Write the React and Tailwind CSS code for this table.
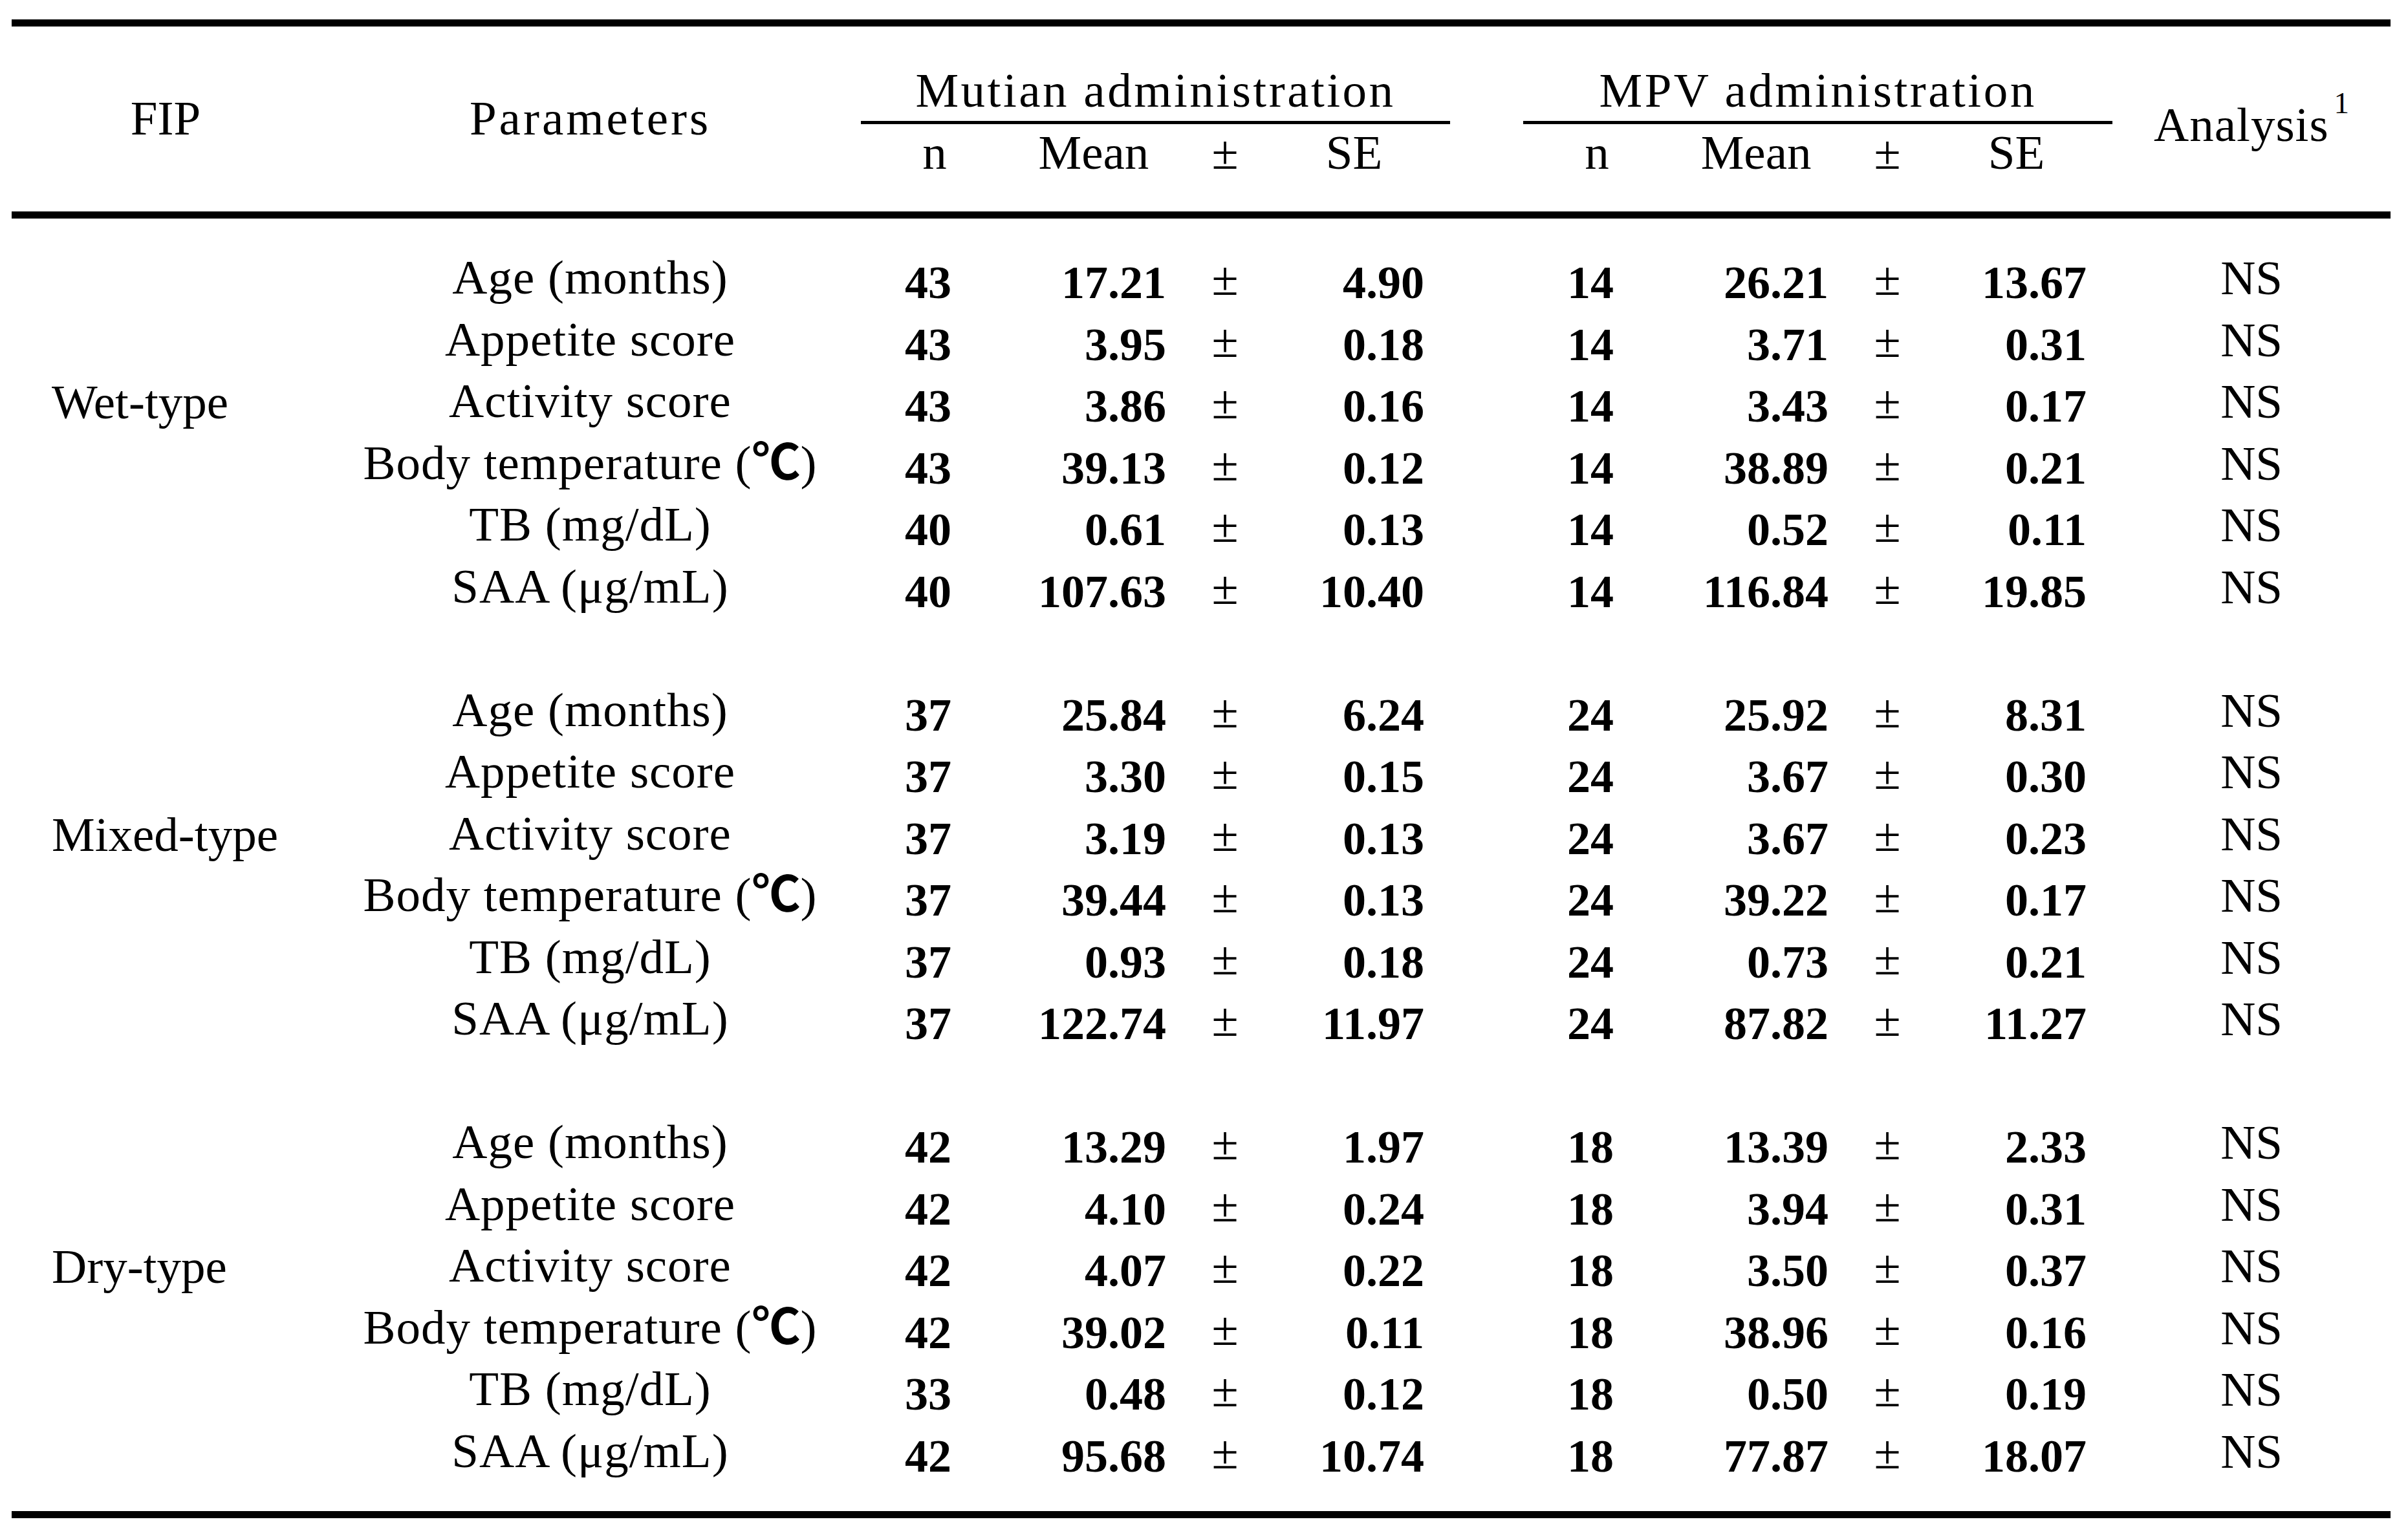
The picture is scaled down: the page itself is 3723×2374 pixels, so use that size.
import React from 'react';

const groups = [
    {
        label: 'Wet-type',
        rows: [
            ['Age (months)', '43', '17.21', '4.90', '14', '26.21', '13.67'],
            ['Appetite score', '43', '3.95', '0.18', '14', '3.71', '0.31'],
            ['Activity score', '43', '3.86', '0.16', '14', '3.43', '0.17'],
            ['temp', '43', '39.13', '0.12', '14', '38.89', '0.21'],
            ['TB (mg/dL)', '40', '0.61', '0.13', '14', '0.52', '0.11'],
            ['SAA (μg/mL)', '40', '107.63', '10.40', '14', '116.84', '19.85'],
        ],
    },
    {
        label: 'Mixed-type',
        rows: [
            ['Age (months)', '37', '25.84', '6.24', '24', '25.92', '8.31'],
            ['Appetite score', '37', '3.30', '0.15', '24', '3.67', '0.30'],
            ['Activity score', '37', '3.19', '0.13', '24', '3.67', '0.23'],
            ['temp', '37', '39.44', '0.13', '24', '39.22', '0.17'],
            ['TB (mg/dL)', '37', '0.93', '0.18', '24', '0.73', '0.21'],
            ['SAA (μg/mL)', '37', '122.74', '11.97', '24', '87.82', '11.27'],
        ],
    },
    {
        label: 'Dry-type',
        rows: [
            ['Age (months)', '42', '13.29', '1.97', '18', '13.39', '2.33'],
            ['Appetite score', '42', '4.10', '0.24', '18', '3.94', '0.31'],
            ['Activity score', '42', '4.07', '0.22', '18', '3.50', '0.37'],
            ['temp', '42', '39.02', '0.11', '18', '38.96', '0.16'],
            ['TB (mg/dL)', '33', '0.48', '0.12', '18', '0.50', '0.19'],
            ['SAA (μg/mL)', '42', '95.68', '10.74', '18', '77.87', '18.07'],
        ],
    },
];

// clases de celdas del cuerpo (padding explícito: td trae 1px del navegador)
const paramCls = 'align-top text-center pt-[2px] pb-0 px-0 leading-[93.5px] tracking-[1px] whitespace-nowrap';
const numCls = 'align-top text-center font-bold text-[72px] pt-[20px] pb-0 px-0 leading-[75.5px] whitespace-nowrap';
const valCls = 'align-top text-right font-bold text-[72px] pt-[20px] pb-0 pl-0 pr-[40px] leading-[75.5px] whitespace-nowrap';
const pmCls = 'align-top text-center pt-[7px] pb-0 px-0 leading-[88.5px]';
const nsCls = 'align-top text-center pt-[4px] pb-0 px-0 leading-[91.5px]';

const headA = 'align-top font-normal text-center px-0 leading-[83px] whitespace-nowrap';
const headB = 'align-top font-normal px-0 leading-[83px] pt-[2px] pb-[50px] border-b-[11px] border-black whitespace-nowrap';

function ParamName({ name }) {
    if (name !== 'temp') return name;
    return (
        <>
            Body temperature (<span className="font-['Noto_Sans_CJK_JP',sans-serif] font-bold tracking-normal leading-[0px]">℃</span>)
        </>
    );
}

function SubHeaders() {
    return (
        <>
            <th className={`${headB} text-center pl-[20px]`}>n</th>
            <th className={`${headB} text-center`}>Mean</th>
            <th className={`${headB} text-center`}>±</th>
            <th className={`${headB} text-center`}>SE</th>
        </>
    );
}

function Values({ n, mean, se }) {
    return (
        <>
            <td className={numCls}>{n}</td>
            <td className={valCls}>{mean}</td>
            <td className={pmCls}>±</td>
            <td className={valCls}>{se}</td>
        </>
    );
}

function App() {
    return (
        <div className="min-h-screen bg-white text-black font-['Liberation_Serif',serif] text-[75px]">
            <div className="ml-[18px] mt-[30px] w-[3678px] border-t-[11px] border-b-[11px] border-black">
                <table className="table-fixed w-[3678px] border-separate border-spacing-0">
                    <colgroup>
                        <col className="w-[476px]" />
                        <col className="w-[837px]" />
                        <col className="w-[208px]" />
                        <col className="w-[304px]" />
                        <col className="w-[102px]" />
                        <col className="w-[297px]" />
                        <col className="w-[113px]" />
                        <col className="w-[208px]" />
                        <col className="w-[304px]" />
                        <col className="w-[102px]" />
                        <col className="w-[297px]" />
                        <col className="w-[430px]" />
                    </colgroup>
                    <thead>
                        <tr>
                            <th rowSpan={2} className={`${headA} pt-[100px] pb-0 border-b-[11px] border-black`}>FIP</th>
                            <th rowSpan={2} className={`${headA} pt-[100px] pb-0 tracking-[4px] border-b-[11px] border-black`}>Parameters</th>
                            <th colSpan={4} className={`${headA} pt-[57px] pb-[6px] tracking-[3.5px] border-b-[5px] border-black`}>Mutian administration</th>
                            <th rowSpan={2} className="p-0 border-b-[11px] border-black"></th>
                            <th colSpan={4} className={`${headA} pt-[57px] pb-[6px] tracking-[3.5px] border-b-[5px] border-black`}>MPV administration</th>
                            <th rowSpan={2} className={`${headA} pt-[110px] pb-0 tracking-[1px] border-b-[11px] border-black`}>
                                Analysis<span className="text-[47px] leading-[0px] align-[43px] ml-[8px] tracking-normal">1</span>
                            </th>
                        </tr>
                        <tr>
                            <SubHeaders />
                            <SubHeaders />
                        </tr>
                    </thead>
                    <tbody>
                        <tr><td colSpan={12} className="h-[42px] p-0"></td></tr>
                        {groups.map((g, gi) => (
                            <React.Fragment key={g.label}>
                                {gi > 0 && <tr><td colSpan={12} className="h-[95.5px] p-0"></td></tr>}
                                {g.rows.map((r, ri) => (
                                    <tr key={ri}>
                                        <td className="align-top pl-[62px] pr-0 pt-[7px] pb-0 leading-[88.5px] whitespace-nowrap">
                                            {ri === 2 ? g.label : ''}
                                        </td>
                                        <td className={paramCls}><ParamName name={r[0]} /></td>
                                        <Values n={r[1]} mean={r[2]} se={r[3]} />
                                        <td className="p-0"></td>
                                        <Values n={r[4]} mean={r[5]} se={r[6]} />
                                        <td className={nsCls}>NS</td>
                                    </tr>
                                ))}
                            </React.Fragment>
                        ))}
                        <tr><td colSpan={12} className="h-[47px] p-0"></td></tr>
                    </tbody>
                </table>
            </div>
        </div>
    );
}

export default App;
